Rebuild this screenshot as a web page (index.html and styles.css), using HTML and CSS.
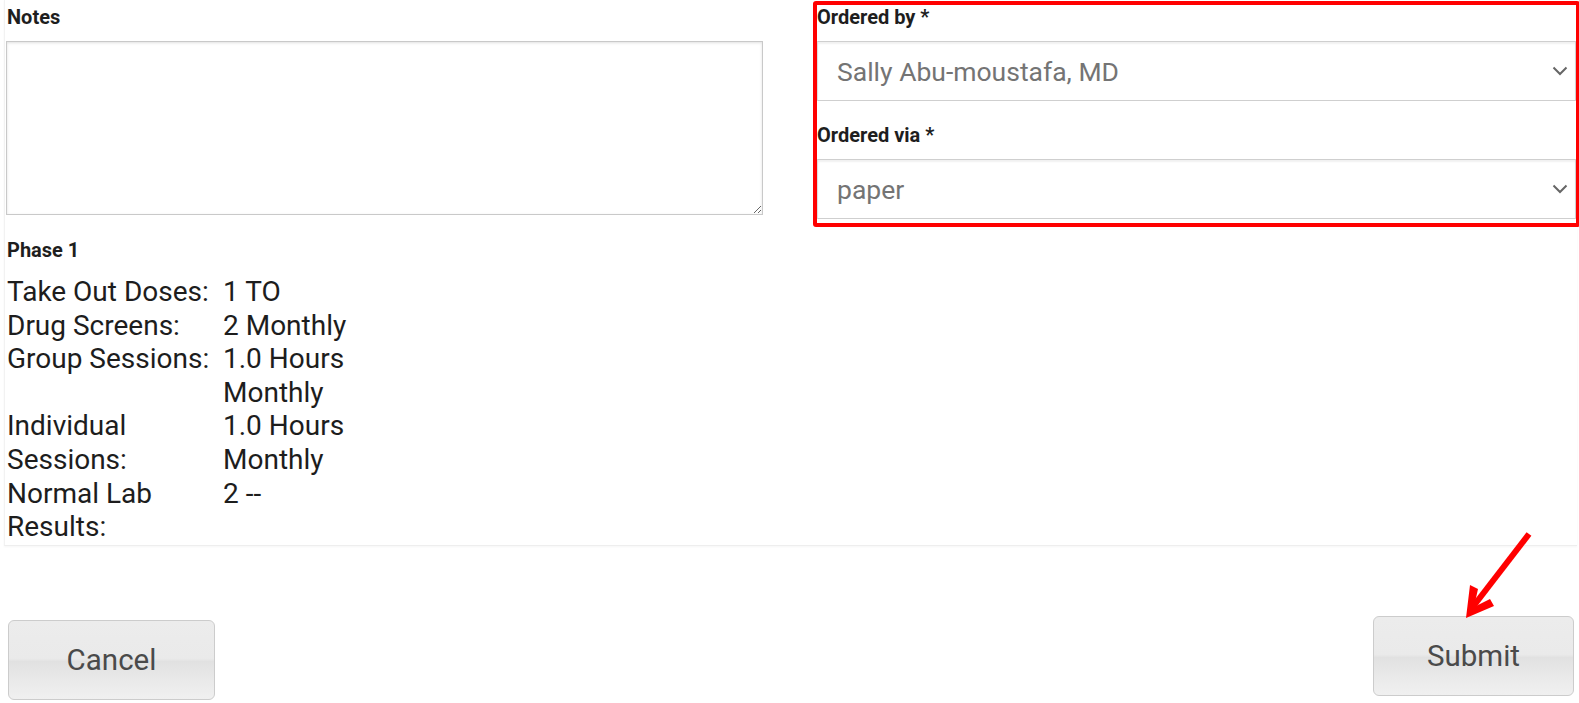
FILE: index.html
```html
<!DOCTYPE html>
<html>
<head>
<meta charset="utf-8">
<link rel="stylesheet" href="styles.css">
</head>
<body>
<div class="page">
  <div class="panel">
    <div class="col-left">
      <div class="label">Notes</div>
      <textarea class="notes"></textarea>
      <div class="label phase-label">Phase 1</div>
      <div class="phase">
        <div class="k">Take Out Doses:</div><div class="v">1 TO</div>
        <div class="k">Drug Screens:</div><div class="v">2 Monthly</div>
        <div class="k">Group Sessions:</div><div class="v">1.0 Hours Monthly</div>
        <div class="k">Individual Sessions:</div><div class="v">1.0 Hours Monthly</div>
        <div class="k">Normal Lab Results:</div><div class="v">2 --</div>
      </div>
    </div>
    <div class="col-right">
      <div class="label">Ordered by *</div>
      <div class="select">
        <span class="select-text">Sally Abu-moustafa, MD</span>
        <svg class="chev" width="16" height="10" viewBox="0 0 16 10"><path d="M1.5 1.5 L8 8 L14.5 1.5" fill="none" stroke="#666" stroke-width="2"/></svg>
      </div>
      <div class="label via-label">Ordered via *</div>
      <div class="select">
        <span class="select-text">paper</span>
        <svg class="chev" width="16" height="10" viewBox="0 0 16 10"><path d="M1.5 1.5 L8 8 L14.5 1.5" fill="none" stroke="#666" stroke-width="2"/></svg>
      </div>
      <div class="highlight"></div>
    </div>
  </div>
  <div class="buttons">
    <button class="btn btn-cancel">Cancel</button>
    <button class="btn btn-submit">Submit</button>
    <svg class="arrow" width="80" height="100" viewBox="0 0 80 100">
      <path d="M69 5 L12 79" stroke="#f00" stroke-width="6" fill="none"/>
      <polygon points="6,89 10,56 18,60 14,78 30,70 34,77" fill="#f00"/>
    </svg>
  </div>
</div>
</body>
</html>
```
FILE: styles.css
```css
* { box-sizing: border-box; }
html, body { margin: 0; padding: 0; background: #fff; }
body { font-family: Roboto, "Liberation Sans", sans-serif; color: #222; }

.page { width: 1579px; height: 703px; position: relative; }

.panel {
  margin-left: 4px;
  width: 1573px;
  height: 546px;
  padding: 0 1px 0 2px;
  display: grid;
  grid-template-columns: 757px 759px;
  column-gap: 53px;
  border-left: 1px solid #f2f2f2;
  border-bottom: 1px solid #eeeeee;
  box-shadow: 0 1px 2px rgba(0,0,0,0.04);
}

.col-left, .col-right { position: relative; }

.label {
  font-weight: 700;
  font-size: 20px;
  line-height: 24px;
  color: #1e1e1e;
  margin-top: 5px;
}

.notes {
  display: block;
  width: 757px;
  height: 174px;
  margin-top: 12px;
  margin-left: -1px;
  border: 1px solid #c9c9c9;
  box-shadow: inset 0 1px 3px rgba(0,0,0,0.12);
  resize: both;
  font-family: inherit;
  background: #fff;
}

.phase-label { margin-top: 23px; }

.phase {
  margin-top: 13px;
  display: grid;
  grid-template-columns: 216px 140px;
  font-size: 28px;
  line-height: 33.6px;
  color: #1d1d1d;
}

.select {
  position: relative;
  height: 60px;
  margin-top: 12px;
  border: 1px solid #cfcfcf;
  border-left-color: #dddddd;
  box-shadow: inset 0 2px 2px rgba(0,0,0,0.06);
  background: #fff;
  display: flex;
  align-items: center;
  padding-left: 19px;
}
.select-text {
  font-size: 26.5px;
  color: #747474;
}
.chev {
  position: absolute;
  right: 7px;
  top: 24px;
}

.via-label { margin-top: 22px; }

.highlight {
  position: absolute;
  left: -4px;
  top: 1px;
  width: 767px;
  height: 226px;
  border: 4px solid #ff0000;
  border-radius: 3px;
  pointer-events: none;
}

.buttons {
  display: flex;
  justify-content: space-between;
  align-items: flex-start;
  padding: 70px 5px 0 8px;
  position: relative;
}

.btn {
  font-family: Roboto, "Liberation Sans", sans-serif;
  font-size: 29.5px;
  color: #4a4a4a;
  height: 80px;
  border: 1px solid #cccccc;
  border-radius: 6px;
  background: linear-gradient(#ececec 0%, #eaeaea 48%, #e1e1e1 52%, #e9e9e9 75%, #f0f0f0 100%);
  padding: 0;
}
.btn-cancel { width: 207px; margin-top: 4px; }
.btn-submit { width: 201px; }

.arrow {
  position: absolute;
  left: 1460px;
  top: -17px;
}
```
